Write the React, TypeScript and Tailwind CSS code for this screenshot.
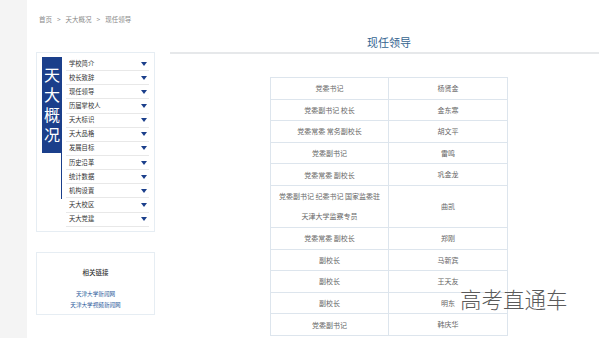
import React from "react";

const menu = [
  "学校简介",
  "校长致辞",
  "现任领导",
  "历届掌校人",
  "天大标识",
  "天大品格",
  "发展目标",
  "历史沿革",
  "统计数据",
  "机构设置",
  "天大校区",
  "天大党建",
];

const rows: { t: React.ReactNode; n: string; tall?: boolean }[] = [
  { t: "党委书记", n: "杨贤金" },
  { t: "党委副书记 校长", n: "金东寒" },
  { t: "党委常委 常务副校长", n: "胡文平" },
  { t: "党委副书记", n: "雷鸣" },
  { t: "党委常委 副校长", n: "巩金龙" },
  {
    t: (
      <>
        党委副书记 纪委书记 国家监委驻
        <br />
        天津大学监察专员
      </>
    ),
    n: "曲凯",
    tall: true,
  },
  { t: "党委常委 副校长", n: "郑刚" },
  { t: "副校长", n: "马新宾" },
  { t: "副校长", n: "王天友" },
  { t: "副校长", n: "明东" },
  { t: "党委副书记", n: "韩庆华" },
];

function Arrow() {
  return (
    <svg width="6" height="4" viewBox="0 0 6 4" className="shrink-0">
      <path d="M0 0 L6 0 L3 4 Z" fill="#1b3f8b" />
    </svg>
  );
}

export default function App() {
  return (
    <div
      className="relative flex w-[599px] h-[338px] overflow-hidden bg-white"
      style={{ fontFamily: '"Noto Sans CJK SC", "Noto Sans", sans-serif' }}
    >
      <div className="w-[27px] h-full bg-[#f4f4f4] shrink-0" />
      <div className="flex-1 flex flex-col">
        <div className="pt-[14px] pl-[12px] h-[30px] text-[6.5px] leading-[10px] text-[#8a8a8a] flex gap-[5px]">
          <span>首页</span>
          <span>&gt;</span>
          <span>天大概况</span>
          <span>&gt;</span>
          <span>现任领导</span>
        </div>
        <div className="flex">
          {/* Sidebar */}
          <div className="ml-[9px] w-[119px] shrink-0 flex flex-col">
            <div className="mt-[22px] h-[180px] border border-[#e6edf3] pl-[5px] pt-[4px] pr-[5px] flex">
              <div className="w-[20px] shrink-0 flex flex-col">
                <div className="h-[95.5px] w-[20px] bg-[#1b3f8b] flex justify-center pt-[10px]">
                  <span className="[writing-mode:vertical-rl] text-white text-[16px] leading-[20px] tracking-[4px]">
                    天大概况
                  </span>
                </div>
                <div className="h-[46px] w-[20px] border-r border-[#1b3f8b]" />
              </div>
              <div className="flex-1 pl-[4px] flex flex-col">
                {menu.map((m) => (
                  <div
                    key={m}
                    className="h-[14.15px] border-b border-[#e8e8e8] flex items-center justify-between pl-[3px] pr-[2px]"
                  >
                    <span className="text-[6.3px] leading-[8px] text-[#333]">{m}</span>
                    <Arrow />
                  </div>
                ))}
              </div>
            </div>
            <div className="mt-[20px] h-[63px] border border-[#e6edf3] flex flex-col items-center pt-[15px]">
              <div className="text-[6.5px] leading-[9px] text-[#333] font-medium">相关链接</div>
              <div className="mt-[12px] text-[5.6px] leading-[11px] text-[#2a5a9a]">天津大学新闻网</div>
              <div className="text-[5.6px] leading-[11px] text-[#2a5a9a]">天津大学视频新闻网</div>
            </div>
          </div>
          {/* Right */}
          <div className="ml-[15px] flex-1 flex flex-col">
            <div className="ml-[100px] w-[238px] pt-[5px] text-center text-[11px] leading-[14px] text-[#33638f]">
              现任领导
            </div>
            <div className="mt-[3px] h-[2px] bg-[#e6e8ea]" />
            <div className="ml-[100px] mt-[23px] w-[238px] border-t border-l border-[#dde5ed]">
              {rows.map((r, i) => (
                <div
                  key={i}
                  className={`flex border-b border-[#dde5ed] ${r.tall ? "h-[42px]" : "h-[21.6px]"}`}
                >
                  <div className="w-[118px] border-r border-[#dde5ed] flex items-center justify-center text-center text-[7px] leading-[20px] text-[#666]">
                    <span>{r.t}</span>
                  </div>
                  <div className="flex-1 border-r border-[#dde5ed] flex items-center justify-center text-[7px] text-[#666]">
                    {r.n}
                  </div>
                </div>
              ))}
            </div>
          </div>
        </div>
      </div>
      <div
        className="absolute left-[460px] top-[286px] text-[21.5px] leading-[26px] text-[#5a5a5a] font-light"
        style={{ textShadow: "0 0 1px #fff, 0 0 1px #fff" }}
      >
        高考直通车
      </div>
    </div>
  );
}
